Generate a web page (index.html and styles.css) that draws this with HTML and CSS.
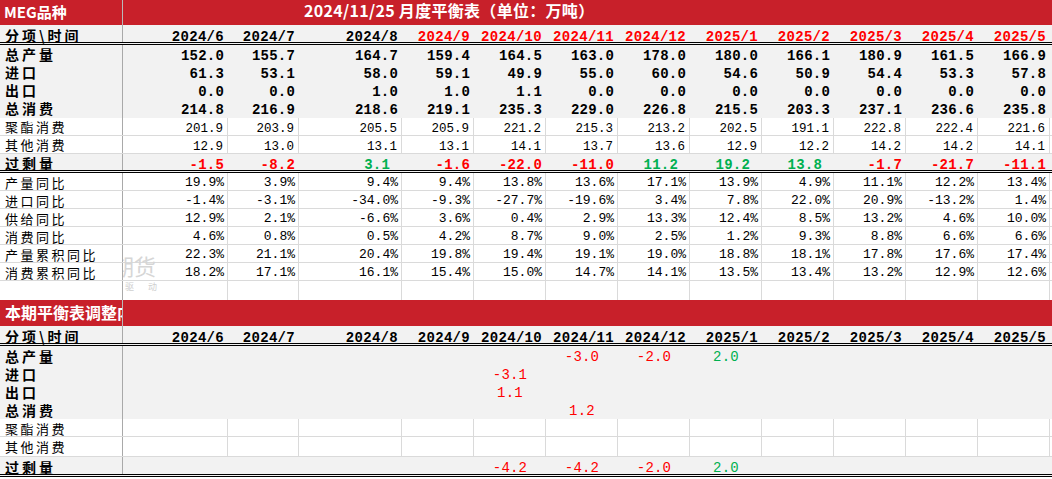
FILE: index.html
```html
<!DOCTYPE html>
<html lang="zh">
<head>
<meta charset="utf-8">
<title>MEG 月度平衡表</title>
<link rel="stylesheet" href="styles.css">
</head>
<body>
<div class="sheet">
  <div class="row bar bar1">
    <div class="c0 bar-l">MEG品种</div>
    <div class="bar-main">2024/11/25 月度平衡表（单位：万吨）</div>
  </div>
  <div class="row hdr g dbl">
    <div class="c0">分项\时间</div>
    <div>2024/6</div><div>2024/7</div><div>2024/8</div>
    <div class="red">2024/9</div><div class="red">2024/10</div><div class="red">2024/11</div><div class="red">2024/12</div>
    <div class="red">2025/1</div><div class="red">2025/2</div><div class="red">2025/3</div><div class="red">2025/4</div><div class="red">2025/5</div><div></div>
  </div>
  <div class="row g b">
    <div class="c0">总产量</div>
    <div>152.0</div><div>155.7</div><div>164.7</div><div>159.4</div><div>164.5</div><div>163.0</div><div>178.0</div><div>180.0</div><div>166.1</div><div>180.9</div><div>161.5</div><div>166.9</div><div></div>
  </div>
  <div class="row g b">
    <div class="c0">进口</div>
    <div>61.3</div><div>53.1</div><div>58.0</div><div>59.1</div><div>49.9</div><div>55.0</div><div>60.0</div><div>54.6</div><div>50.9</div><div>54.4</div><div>53.3</div><div>57.8</div><div></div>
  </div>
  <div class="row g b">
    <div class="c0">出口</div>
    <div>0.0</div><div>0.0</div><div>1.0</div><div>1.0</div><div>1.1</div><div>0.0</div><div>0.0</div><div>0.0</div><div>0.0</div><div>0.0</div><div>0.0</div><div>0.0</div><div></div>
  </div>
  <div class="row g b h19">
    <div class="c0">总消费</div>
    <div>214.8</div><div>216.9</div><div>218.6</div><div>219.1</div><div>235.3</div><div>229.0</div><div>226.8</div><div>215.5</div><div>203.3</div><div>237.1</div><div>236.6</div><div>235.8</div><div></div>
  </div>
  <div class="row w r">
    <div class="c0">聚酯消费</div>
    <div>201.9</div><div>203.9</div><div>205.5</div><div>205.9</div><div>221.2</div><div>215.3</div><div>213.2</div><div>202.5</div><div>191.1</div><div>222.8</div><div>222.4</div><div>221.6</div><div></div>
  </div>
  <div class="row w r">
    <div class="c0">其他消费</div>
    <div>12.9</div><div>13.0</div><div>13.1</div><div>13.1</div><div>14.1</div><div>13.7</div><div>13.6</div><div>12.9</div><div>12.2</div><div>14.2</div><div>14.2</div><div>14.1</div><div></div>
  </div>
  <div class="row g b dbl h19 surplus">
    <div class="c0">过剩量</div>
    <div class="red">-1.5</div><div class="red">-8.2</div><div class="grn pos">3.1</div><div class="red">-1.6</div><div class="red">-22.0</div><div class="red">-11.0</div><div class="grn pos">11.2</div><div class="grn pos">19.2</div><div class="grn pos">13.8</div><div class="red">-1.7</div><div class="red">-21.7</div><div class="red">-11.1</div><div></div>
  </div>
  <div class="row w p">
    <div class="c0">产量同比</div>
    <div>19.9%</div><div>3.9%</div><div>9.4%</div><div>9.4%</div><div>13.8%</div><div>13.6%</div><div>17.1%</div><div>13.9%</div><div>4.9%</div><div>11.1%</div><div>12.2%</div><div>13.4%</div><div></div>
  </div>
  <div class="row w p">
    <div class="c0">进口同比</div>
    <div>-1.4%</div><div>-3.1%</div><div>-34.0%</div><div>-9.3%</div><div>-27.7%</div><div>-19.6%</div><div>3.4%</div><div>7.8%</div><div>22.0%</div><div>20.9%</div><div>-13.2%</div><div>1.4%</div><div></div>
  </div>
  <div class="row w p">
    <div class="c0">供给同比</div>
    <div>12.9%</div><div>2.1%</div><div>-6.6%</div><div>3.6%</div><div>0.4%</div><div>2.9%</div><div>13.3%</div><div>12.4%</div><div>8.5%</div><div>13.2%</div><div>4.6%</div><div>10.0%</div><div></div>
  </div>
  <div class="row w p">
    <div class="c0">消费同比</div>
    <div>4.6%</div><div>0.8%</div><div>0.5%</div><div>4.2%</div><div>8.7%</div><div>9.0%</div><div>2.5%</div><div>1.2%</div><div>9.3%</div><div>8.8%</div><div>6.6%</div><div>6.6%</div><div></div>
  </div>
  <div class="row w p">
    <div class="c0">产量累积同比</div>
    <div>22.3%</div><div>21.1%</div><div>20.4%</div><div>19.8%</div><div>19.4%</div><div>19.1%</div><div>19.0%</div><div>18.8%</div><div>18.1%</div><div>17.8%</div><div>17.6%</div><div>17.4%</div><div></div>
  </div>
  <div class="row w p">
    <div class="c0">消费累积同比</div>
    <div>18.2%</div><div>17.1%</div><div>16.1%</div><div>15.4%</div><div>15.0%</div><div>14.7%</div><div>14.1%</div><div>13.5%</div><div>13.4%</div><div>13.2%</div><div>12.9%</div><div>12.6%</div><div></div>
  </div>
  <div class="row w p h19 noline">
    <div class="c0"></div>
    <div></div><div></div><div></div><div></div><div></div><div></div><div></div><div></div><div></div><div></div><div></div><div></div><div></div>
  </div>

  <div class="row bar bar2">
    <div class="c0 bar-l">本期平衡表调整内容</div>
    <div class="bar-main"></div>
  </div>
  <div class="row hdr g dbl">
    <div class="c0">分项\时间</div>
    <div>2024/6</div><div>2024/7</div><div>2024/8</div><div>2024/9</div><div>2024/10</div><div>2024/11</div><div>2024/12</div>
    <div>2025/1</div><div>2025/2</div><div>2025/3</div><div>2025/4</div><div>2025/5</div><div></div>
  </div>
  <div class="row g adj lb">
    <div class="c0">总产量</div>
    <div></div><div></div><div></div><div></div><div></div><div class="red">-3.0</div><div class="red">-2.0</div><div class="grn">2.0</div><div></div><div></div><div></div><div></div><div></div>
  </div>
  <div class="row g adj lb">
    <div class="c0">进口</div>
    <div></div><div></div><div></div><div></div><div class="red">-3.1</div><div></div><div></div><div></div><div></div><div></div><div></div><div></div><div></div>
  </div>
  <div class="row g adj lb">
    <div class="c0">出口</div>
    <div></div><div></div><div></div><div></div><div class="red">1.1</div><div></div><div></div><div></div><div></div><div></div><div></div><div></div><div></div>
  </div>
  <div class="row g adj lb h19">
    <div class="c0">总消费</div>
    <div></div><div></div><div></div><div></div><div></div><div class="red">1.2</div><div></div><div></div><div></div><div></div><div></div><div></div><div></div>
  </div>
  <div class="row w adj">
    <div class="c0">聚酯消费</div>
    <div></div><div></div><div></div><div></div><div></div><div></div><div></div><div></div><div></div><div></div><div></div><div></div><div></div>
  </div>
  <div class="row w adj h20">
    <div class="c0">其他消费</div>
    <div></div><div></div><div></div><div></div><div></div><div></div><div></div><div></div><div></div><div></div><div></div><div></div><div></div>
  </div>
  <div class="row g adj lb dbl h20">
    <div class="c0">过剩量</div>
    <div></div><div></div><div></div><div></div><div class="red">-4.2</div><div class="red">-4.2</div><div class="red">-2.0</div><div class="grn">2.0</div><div></div><div></div><div></div><div></div><div></div>
  </div>

  <div class="wm">
    <span class="wm-big">期货</span>
    <span class="wm-small">驱动</span>
  </div>
</div>
</body>
</html>
```
FILE: styles.css
```css
html, body {
  margin: 0;
  padding: 0;
  background: #ffffff;
}
body {
  width: 1052px;
  height: 479px;
  overflow: hidden;
  font-family: "Liberation Mono", "DejaVu Sans Mono", monospace;
  color: #000000;
}
.sheet {
  position: relative;
  width: 1052px;
}
.row {
  display: grid;
  grid-template-columns: 123px 105px 71px 103px repeat(9, 72px) 2px;
  height: 18px;
  box-sizing: border-box;
}
.row > div {
  box-sizing: border-box;
  white-space: nowrap;
  line-height: 10px;
  text-align: right;
  padding-right: 4px;
}
.row > .c0 {
  text-align: left;
  padding: 5px 0 0 5px;
  border-right: 1px solid #a9a9a9;
  font-family: "Noto Sans CJK SC", sans-serif;
  font-size: 13px;
  letter-spacing: 2.5px;
}
.h19 { height: 19px; }
.h20 { height: 20px; }

.g { background: #f2f2f2; }
.w { background: #ffffff; border-bottom: 1px solid #dadada; }
.noline { border-bottom: none; }
.w > div:not(.c0):not(:last-child) { border-right: 1px solid #dadada; }
.dbl { border-bottom: 3px double #000000; }

/* red title bars */
.bar {
  grid-template-columns: 123px 1fr;
  background: #c8202a;
  color: #ffffff;
  font-family: "Noto Sans CJK SC", sans-serif;
  font-weight: bold;
}
.bar1 { height: 25px; }
.bar2 { height: 26px; }
.row.bar > .c0 {
  border-right: 1px solid #b9b9b9;
  font-size: 15px;
  letter-spacing: 0;
  line-height: 24px;
  padding: 0 0 0 4px;
}
.row.bar2 > .c0 {
  font-size: 16px;
  line-height: 25px;
  padding-left: 5px;
  overflow: hidden;
}
.row > .bar-main {
  text-align: left;
  font-size: 16px;
  line-height: 21px;
  letter-spacing: 0.3px;
  padding-left: 181px;
}

/* header rows */
.hdr { height: 20px; }
.hdr > div {
  font-weight: bold;
  font-size: 14px;
  letter-spacing: 0.3px;
  padding-top: 7px;
}
.row.hdr > .c0 {
  font-size: 14px;
  letter-spacing: 3px;
  padding-top: 5px;
}

/* bold value rows */
.b > div {
  font-weight: bold;
  font-size: 14px;
  letter-spacing: 0.2px;
  padding-top: 6px;
}
.row.b > .c0,
.row.lb > .c0 {
  font-weight: bold;
  font-size: 14px;
  letter-spacing: 3px;
  padding-top: 4px;
}
.row.lb > .c0 { padding-top: 5px; }

/* regular value rows */
.r > div {
  font-size: 12.5px;
  padding-top: 6px;
}
.row.r > .c0 { padding-top: 4px; }

/* percent rows */
.p > div {
  font-size: 13px;
  padding-top: 5px;
  padding-right: 3px;
}
.row.p > .c0 {
  font-size: 13px;
  letter-spacing: 2.5px;
  padding-top: 5px;
}

/* adjustment table */
.adj > div {
  font-size: 14px;
  text-align: center;
  padding: 6px 0 0 0;
  letter-spacing: 0.2px;
}

.red { color: #ff0000; }
.grn { color: #00b050; }
.row > .pos { padding-right: 12px; }

/* faint watermark over the data cells */
.wm {
  position: absolute;
  left: 123px;
  top: 250px;
  width: 60px;
  height: 48px;
  overflow: hidden;
  pointer-events: none;
  font-family: "Noto Sans CJK SC", sans-serif;
}
.wm-big {
  position: absolute;
  left: -11px;
  top: 0;
  font-size: 22px;
  line-height: 30px;
  color: #d6d6d6;
  letter-spacing: 0;
}
.wm-small {
  position: absolute;
  left: 2px;
  top: 31px;
  font-size: 9px;
  line-height: 12px;
  letter-spacing: 14px;
  color: #cfcfcf;
}
```
